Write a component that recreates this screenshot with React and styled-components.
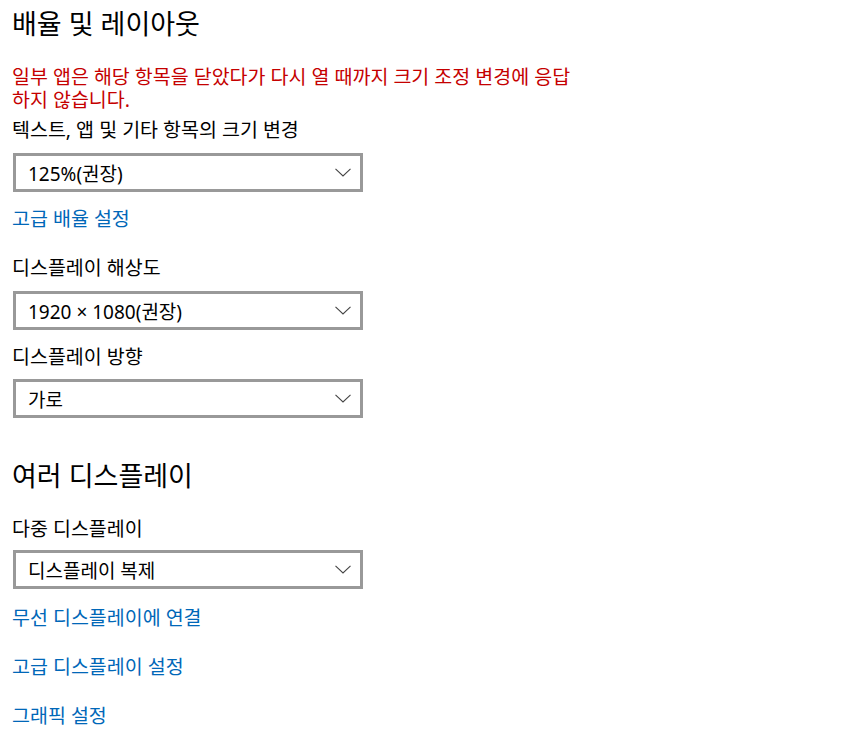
import React from "react";
import styled, { createGlobalStyle } from "styled-components";

const GlobalStyle = createGlobalStyle`
  body {
    margin: 0;
    background: #fff;
    font-family: "Noto Sans", "Liberation Sans", "Noto Sans CJK KR", sans-serif;
  }
`;

const Page = styled.div`
  padding: 0 12px;
  display: flex;
  flex-direction: column;
  align-items: flex-start;
`;

const SectionTitle = styled.h2`
  margin: ${p => p.$mt}px 0 0;
  font-size: 27px;
  font-weight: 400;
  line-height: 36px;
  color: #000;
`;

const Warning = styled.p`
  margin: ${p => p.$mt}px 0 0;
  width: 566px;
  font-size: 19.5px;
  line-height: 23px;
  color: #c50000;
`;

const Label = styled.div`
  margin-top: ${p => p.$mt}px;
  font-size: 19.5px;
  line-height: 24px;
  color: #000;
`;

const Link = styled.a`
  margin-top: ${p => p.$mt}px;
  font-size: 19.5px;
  line-height: 24px;
  color: #0067b8;
  text-decoration: none;
  cursor: pointer;
`;

const Select = styled.div`
  margin: ${p => p.$mt}px 0 0 1px;
  box-sizing: border-box;
  width: 350px;
  height: 39px;
  border: 3px solid #999;
  display: flex;
  align-items: center;
  justify-content: space-between;
  padding: 0 9px 0 12px;
  font-size: 19px;
  color: #000;
`;

const Chevron = () => (
  <svg width="16" height="9" viewBox="0 0 16 9">
    <polyline points="0.5,0.8 8,8 15.5,0.8" fill="none" stroke="#444" strokeWidth="1.1" />
  </svg>
);

const Dropdown = ({ value, mt }) => (
  <Select $mt={mt}>
    <span>{value}</span>
    <Chevron />
  </Select>
);

export default function App() {
  return (
    <>
      <GlobalStyle />
      <Page>
        <SectionTitle $mt={6}>배율 및 레이아웃</SectionTitle>
        <Warning $mt={23}>
          일부 앱은 해당 항목을 닫았다가 다시 열 때까지 크기 조정 변경에 응답하지 않습니다.
        </Warning>
        <Label $mt={7}>텍스트, 앱 및 기타 항목의 크기 변경</Label>
        <Dropdown mt={11} value="125%(권장)" />
        <Link $mt={15}>고급 배율 설정</Link>

        <Label $mt={25}>디스플레이 해상도</Label>
        <Dropdown mt={11} value="1920 × 1080(권장)" />
        <Label $mt={15}>디스플레이 방향</Label>
        <Dropdown mt={10} value="가로" />

        <SectionTitle $mt={40}>여러 디스플레이</SectionTitle>
        <Label $mt={23}>다중 디스플레이</Label>
        <Dropdown mt={9} value="디스플레이 복제" />
        <Link $mt={17}>무선 디스플레이에 연결</Link>
        <Link $mt={25}>고급 디스플레이 설정</Link>
        <Link $mt={25}>그래픽 설정</Link>
      </Page>
    </>
  );
}
